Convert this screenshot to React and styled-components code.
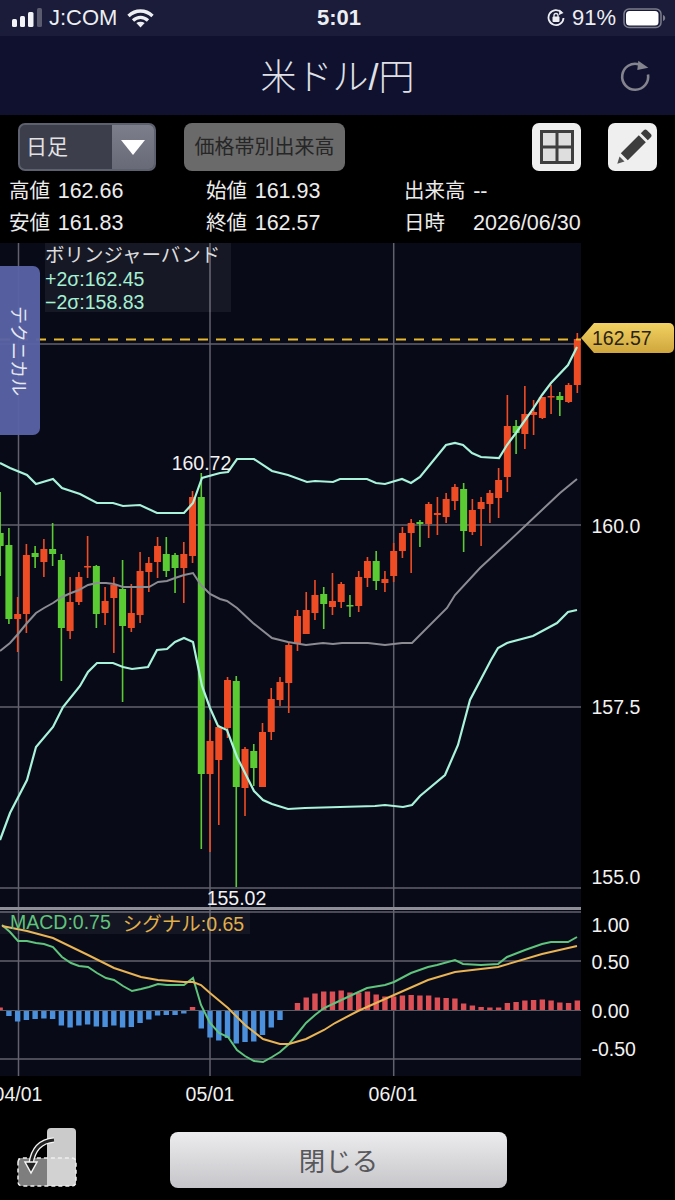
import React from "react"
import styled, { createGlobalStyle } from "styled-components"

const SANS = `"Liberation Sans", "Noto Sans CJK JP", sans-serif`

// candles left to right: [colour, wick top, body top, body bottom, wick bottom]
const CANDLES = [
  ["g", 492, 533, 546, 576], ["g", 528, 545, 619, 624], ["r", 597, 614, 619, 652], ["r", 544, 555, 614, 633],
  ["g", 546, 553, 557, 568], ["r", 539, 549, 562, 577], ["g", 523, 549, 554, 566], ["g", 554, 560, 628, 681],
  ["r", 577, 602, 631, 639], ["r", 572, 577, 602, 605], ["r", 536, 566, 567, 578], ["g", 565, 566, 614, 628],
  ["r", 587, 601, 613, 625], ["r", 577, 585, 598, 653], ["g", 560, 589, 626, 702], ["r", 584, 613, 628, 632],
  ["r", 552, 571, 615, 623], ["r", 557, 563, 572, 592], ["r", 537, 546, 562, 578], ["g", 537, 554, 571, 577],
  ["g", 553, 555, 568, 593], ["r", 542, 554, 568, 603], ["r", 491, 497, 556, 563], ["g", 473, 497, 774, 849],
  ["r", 720, 741, 774, 852], ["r", 725, 727, 760, 825], ["r", 677, 680, 728, 738], ["g", 676, 681, 787, 887],
  ["r", 747, 749, 788, 816], ["g", 744, 751, 768, 786], ["r", 723, 732, 787, 787], ["r", 688, 699, 732, 740],
  ["r", 677, 682, 700, 706], ["r", 643, 645, 683, 713], ["r", 610, 616, 643, 651], ["r", 592, 610, 634, 634],
  ["r", 580, 595, 613, 620], ["g", 587, 594, 604, 629], ["r", 573, 601, 607, 615], ["r", 582, 584, 602, 608],
  ["g", 595, 605, 606, 617], ["r", 571, 577, 606, 612], ["r", 557, 561, 578, 587], ["g", 551, 561, 581, 590],
  ["r", 571, 579, 583, 592], ["r", 543, 551, 576, 582], ["r", 527, 533, 551, 558], ["r", 519, 523, 533, 573],
  ["g", 520, 522, 524, 547], ["r", 502, 504, 524, 538], ["r", 497, 513, 515, 535], ["r", 493, 499, 517, 523],
  ["r", 484, 487, 501, 510], ["g", 483, 489, 531, 552], ["r", 499, 510, 532, 535], ["r", 497, 502, 509, 546],
  ["r", 490, 493, 504, 523], ["r", 468, 480, 498, 518], ["r", 395, 426, 477, 492], ["g", 420, 426, 433, 454],
  ["r", 386, 414, 434, 449], ["r", 400, 412, 415, 435], ["r", 397, 397, 418, 419], ["r", 385, 396, 397, 414],
  ["g", 392, 396, 400, 416], ["r", 383, 385, 402, 403], ["r", 333, 339, 385, 393],
]

// MACD histogram, px from the zero line (up is positive)
const HIST = [
  3, -5.5, -11, -9.5, -8.5, -8, -8.5, -15, -17, -15, -14, -16, -16.5, -15, -17, -16.5, -12.5, -9, -5, -4.5,
  -4.5, -3, 3.5, -18, -27, -30, -27.5, -33, -31.5, -31, -24.5, -17, -9.5, 0, 7.5, 13, 17, 19, 19, 20, 18, 18,
  19, 16, 14, 14, 15, 15.5, 15, 15, 13, 12.5, 12, 7, 5, 3.5, 3, 3, 7.5, 8.5, 10, 10.5, 11, 10, 8, 7.5, 10,
]

const UPPER = "0,463 10,468 27,475 36,484 53,479 62,488 80,494 97,503 113,503 123,506 140,505 157,513 175,513 184,513 193,503 202,478 220,473 228,472 237,459 254,459 272,471 288,475 307,482 315,481 333,482 340,479 367,479 376,483 385,484 402,479 411,483 420,477 446,445 455,443 463,445 472,453 481,457 499,458 507,445 516,433 533,409 542,395 551,383 568,365 577,347"
const MIDDLE = "0,651 10,643 18,634 27,623 36,613 44,608 53,603 62,597 71,593 79,590 88,585 97,583 106,583 114,584 123,587 132,587 149,587 158,582 167,581 175,578 184,575 193,573 201,585 210,594 220,599 227,601 237,608 253,623 272,638 288,642 306,645 323,643 333,644 342,643 368,643 385,645 402,643 412,643 447,608 455,595 480,568 508,542 560,493 577,479"
const LOWER = "0,840 10,813 27,780 36,747 53,727 63,707 80,686 88,672 97,663 113,663 123,667 132,669 148,667 157,650 167,649 175,642 184,638 193,642 202,686 210,708 218,726 227,730 237,757 245,773 254,791 263,800 272,804 288,809 305,808 340,807 375,806 385,805 403,807 412,805 420,796 445,775 458,745 470,700 491,660 498,648 507,643 533,636 557,623 568,612 577,610"
const MACD = "2,925 10,932 18,941 27,941 36,943 44,944 53,947 62,957 71,963 79,966 88,967 97,973 106,978 114,980 123,986 132,991 141,989 149,987 158,984 167,985 184,985 193,978 201,1005 210,1023 219,1033 228,1037 237,1050 245,1056 254,1061 263,1062 272,1057 280,1052 289,1044 298,1033 306,1023 315,1015 324,1008 335,1003 352,995 367,988 385,985 394,982 411,973 428,967 437,965 455,960 463,964 481,965 498,964 507,957 525,950 542,944 551,942 568,942 577,937"
const SIGNAL = "2,926 27,931 53,938 88,955 114,968 141,977 158,980 184,982 193,982 201,985 210,993 228,1008 245,1025 263,1039 280,1044 289,1044 306,1039 324,1030 335,1023 358,1011 394,995 428,980 455,972 498,967 542,954 577,946"

const GRID_Y = [344, 525, 707, 888, 912, 961, 1059]
const GRID_X = [18.5, 210, 393.7]
const Y_LABELS = [["160.0", 526], ["157.5", 707], ["155.0", 877], ["1.00", 925], ["0.50", 962], ["0.00", 1011], ["-0.50", 1049]]
const X_LABELS = [["04/01", 18], ["05/01", 210], ["06/01", 393]]
const ZERO = 1010.5

const candleX = i => 0.15 + 8.745 * i

const GlobalStyle = createGlobalStyle`
  html, body {
    margin: 0;
    background: #000;
  }
  body {
    width: 675px;
    height: 1200px;
    overflow: hidden;
    font-family: ${SANS};
  }
`

const Page = styled.div`
  width: 675px;
  height: 1200px;
  display: flex;
  flex-direction: column;
  background: #000;
  color: #eee;
`

const StatusBar = styled.div`
  height: 36px;
  padding: 0 9px 0 12px;
  display: grid;
  grid-template-columns: 1fr auto 1fr;
  align-items: center;
  background: #1a1c39;
  color: #eceef2;
  font-size: 22px;
`

const StatusGroup = styled.div`
  display: flex;
  align-items: center;
  gap: ${p => p.$gap || 7}px;
  justify-content: ${p => (p.$end ? "flex-end" : "flex-start")};
`

const Clock = styled.div`
  font-size: 22px;
  font-weight: 700;
`

const NavBar = styled.div`
  position: relative;
  height: 79px;
  padding-bottom: 4px;
  box-sizing: border-box;
  display: flex;
  align-items: center;
  justify-content: center;
  background: #10112f;
`

const Title = styled.h1`
  margin: 0;
  color: #dfe0e6;
  font-size: 36px;
  font-weight: 300;
`

const RefreshButton = styled.div`
  position: absolute;
  right: 23px;
  top: 24px;
  width: 32px;
  height: 32px;
`

const Toolbar = styled.div`
  margin-top: 8px;
  padding: 0 18px;
  display: flex;
  align-items: stretch;
  height: 48px;
`

const Select = styled.div`
  width: 138px;
  box-sizing: border-box;
  display: flex;
  border: 2px solid #5d606e;
  border-radius: 7px;
  overflow: hidden;
  background: #3c3e4b;
`

const SelectLabel = styled.div`
  width: 92px;
  box-sizing: border-box;
  padding: 0 0 4px 6px;
  display: flex;
  align-items: center;
  font-size: 21px;
  color: #e2e2e4;
`

const SelectArrow = styled.div`
  flex: 1;
  display: flex;
  align-items: center;
  justify-content: center;
  background: linear-gradient(#7c7f8b, #686b77);

  &::after {
    content: "";
    border-left: 12px solid transparent;
    border-right: 12px solid transparent;
    border-top: 15px solid #fff;
  }
`

const VolumeButton = styled.div`
  width: 161px;
  box-sizing: border-box;
  margin-left: 28px;
  padding-bottom: 3px;
  display: flex;
  align-items: center;
  justify-content: center;
  border-radius: 8px;
  background: #6a6a6a;
  color: #262626;
  font-size: 20px;
`

const ToolButtons = styled.div`
  margin-left: auto;
  display: flex;
  gap: 27px;
`

const IconButton = styled.div`
  width: 49px;
  display: flex;
  align-items: center;
  justify-content: center;
  border-radius: 7px;
  background: #efefef;
`

const InfoGrid = styled.div`
  margin-top: 2px;
  height: 64px;
  display: grid;
  grid-template-columns: 197px 198px 1fr;
  grid-auto-rows: 32px;
  padding-left: 9px;
  align-items: center;
  font-size: 20.5px;
  color: #ececec;
`

const InfoCell = styled.div`
  white-space: nowrap;
`

const InfoValue = styled.span`
  margin-left: ${p => p.$gap || 2}px;
  font-size: 21.5px;
`

const ChartPanel = styled.div`
  position: relative;
  margin-top: 6px;
  height: 867px;
`

const ChartSvg = styled.svg`
  display: block;
`

const AxisText = styled.text`
  fill: #f2f2f2;
  font-family: ${SANS};
  font-size: 19.5px;
`

const TechnicalTab = styled.div`
  position: absolute;
  left: 0;
  top: 23px;
  width: 40px;
  height: 169px;
  display: flex;
  align-items: center;
  justify-content: center;
  border-radius: 0 7px 7px 0;
  background: rgba(88, 99, 165, 0.96);
  color: #e6e8f2;
  font-size: 18px;
  writing-mode: vertical-rl;
  text-orientation: sideways;
`

const Legend = styled.div`
  position: absolute;
  left: 45px;
  top: 0;
  width: 186px;
  height: 69px;
  background: rgba(255, 255, 255, 0.06);
  padding-top: 1px;
  box-sizing: border-box;
  line-height: 23.5px;
  overflow: hidden;
`

const LegendTitle = styled.div`
  color: #dcdcdc;
  font-size: 19.5px;
  white-space: nowrap;
`

const LegendValue = styled.div`
  color: #a4f0d2;
  font-size: 19.5px;
`

const MacdLegend = styled.div`
  position: absolute;
  left: 0;
  top: 668px;
  height: 23px;
  width: 240px;
  padding-left: 10px;
  display: flex;
  align-items: center;
  gap: 12px;
  background: rgba(255, 255, 255, 0.05);
  font-size: 19.5px;
  white-space: nowrap;
`

const MacdValue = styled.span`
  color: ${p => p.$color};
`

const PriceTag = styled.div`
  position: absolute;
  left: 581px;
  top: 80px;
  width: 93px;
  height: 30px;
  padding-left: 11px;
  box-sizing: border-box;
  display: flex;
  align-items: center;
  background: linear-gradient(#f2d162, #cfa63c);
  clip-path: polygon(13px 0, 100% 0, 100% 100%, 13px 100%, 0 50%);
  border-radius: 0 5px 5px 0;
  color: #2a2414;
  font-size: 19.5px;
`

const BottomBar = styled.div`
  flex: 1;
  padding: 18px 0 0 17px;
  display: flex;
  align-items: flex-start;
`

const CloseButton = styled.div`
  width: 337px;
  height: 56px;
  margin: 4px 0 0 93px;
  padding-bottom: 2px;
  box-sizing: border-box;
  display: flex;
  align-items: center;
  justify-content: center;
  border-radius: 8px;
  background: linear-gradient(#ececee, #c6c6ca);
  color: #58585c;
  font-size: 26.5px;
`

const Wifi = () => (
  <svg width="30" height="20" viewBox="-3 0 30 20">
    <path d="M1.500 8C4.700 5 8.600 3 13.500 3s8.800 2 12 5" fill="none" stroke="#eceef2" strokeWidth="3.400" />
    <path d="M6 12.500c2.100-2 4.700-3.200 7.500-3.200s5.400 1.200 7.500 3.200" fill="none" stroke="#eceef2" strokeWidth="3.200" />
    <path d="M13.500 19.500l-4.200-4.600c2.500-1.700 5.900-1.700 8.400 0z" fill="#eceef2" />
  </svg>
)

const SignalIcon = () => (
  <svg width="30" height="20" viewBox="0 0 30 20">
    <rect x="0" y="11" width="5" height="8" rx="1.500" fill="#f2f3f6" />
    <rect x="8" y="8" width="5" height="11" rx="1.500" fill="#f2f3f6" />
    <rect x="16" y="4" width="5.500" height="15" rx="1.500" fill="#f2f3f6" />
    <rect x="25" y="0" width="5" height="19" rx="1.500" fill="#5a5b6e" />
  </svg>
)

const RotationLock = () => (
  <svg width="18" height="20" viewBox="0 0 18 20">
    <path d="M14.500 4.500A7.500 7.500 0 1 0 16.500 10" fill="none" stroke="#eceef2" strokeWidth="1.800" />
    <path d="M12.500 1.500l4 3.500-4.500 2z" fill="#eceef2" />
    <rect x="5.500" y="8.500" width="7" height="5.500" rx="1" fill="#eceef2" />
    <path d="M7 9V7.500a2 2 0 0 1 4 0V9" fill="none" stroke="#eceef2" strokeWidth="1.300" />
  </svg>
)

const Battery = () => (
  <svg width="43" height="21" viewBox="0 0 43 21">
    <rect x="1" y="1" width="37" height="18.500" rx="5" fill="none" stroke="#7c7d8c" strokeWidth="1.500" />
    <rect x="3" y="3" width="32.500" height="14.500" rx="3.500" fill="#fff" />
    <path d="M40 7v6c1.500-.4 2.200-1.700 2.200-3S41.500 7.400 40 7z" fill="#7c7d8c" />
  </svg>
)

const RefreshIcon = () => (
  <svg width="32" height="32" viewBox="0 0 32 32">
    <path d="M28 14.500A13 13 0 1 1 19 4.300" fill="none" stroke="#83848e" strokeWidth="2.600" />
    <path d="M18.300 .7l10 7-11 2.300z" fill="#83848e" />
  </svg>
)

const WindowIcon = () => (
  <svg width="34" height="34" viewBox="0 0 34 34">
    <rect x="1.500" y="1.500" width="31" height="31" fill="#dedede" stroke="#3f3f3f" strokeWidth="3" />
    <path d="M17 2v30M2 17h30" stroke="#3f3f3f" strokeWidth="3" />
  </svg>
)

const PencilIcon = () => (
  <svg width="38" height="38" viewBox="0 0 38 38">
    <path d="M6.800 25.300L24.800 7.300l7 7L13.800 32.300z" fill="#3d3d3d" />
    <path d="M26.800 5.300l3-3c1-1 2.200-1 3.200 0l3.800 3.800c1 1 1 2.200 0 3.200l-3 3z" fill="#3d3d3d" />
    <path d="M3.300 35.800l2.200-7.300 5 5z" fill="#555" />
  </svg>
)

const TransferIcon = () => (
  <svg width="60" height="60" viewBox="0 0 60 60">
    <path d="M30 4a4 4 0 0 1 4-4h21a4 4 0 0 1 4 4v26H30z" fill="#cbcbcb" />
    <path d="M30 30h29v24a4 4 0 0 1-4 4H30z" fill="#d2d2d2" />
    <path d="M1 30h29v28H5a4 4 0 0 1-4-4z" fill="#7e7e7e" />
    <path d="M1 34a4 4 0 0 1 4-4h50a4 4 0 0 1 4 4v20a4 4 0 0 1-4 4H5a4 4 0 0 1-4-4z" fill="none" stroke="#f0f0f0" strokeWidth="1.500" strokeDasharray="4 3" />
    <path d="M37 12C24 13 16 21 14 36" fill="none" stroke="#f4f4f4" strokeWidth="5.500" />
    <path d="M37 12C24 13 16 21 14 36" fill="none" stroke="#222" strokeWidth="2.800" />
    <path d="M14 45L8 34h12z" fill="#222" stroke="#f4f4f4" strokeWidth="1.500" />
  </svg>
)

const Chart = () => (
  <ChartSvg width="675" height="867" viewBox="0 243 675 867">
    <rect x="0" y="243" width="581" height="833" fill="#090a18" />
    {GRID_Y.map(y => (
      <line key={y} x1="0" x2="581" y1={y} y2={y} stroke="#62626c" strokeWidth="1.500" />
    ))}
    {GRID_X.map(x => (
      <line key={x} x1={x} x2={x} y1="243" y2="1076" stroke="#62626e" strokeWidth="1.500" />
    ))}

    {CANDLES.map(([c, wt, bt, bb, wb], i) => {
      const x = candleX(i)
      const fill = c === "r" ? "#ee4c24" : "#5bcb33"
      return (
        <g key={i} fill={fill}>
          <rect x={x - 0.8} y={wt} width="1.600" height={wb - wt} />
          <rect x={x - 3.500} y={bt} width="7" height={Math.max(bb - bt, 1.500)} />
        </g>
      )
    })}

    <polyline points={MIDDLE} fill="none" stroke="#8b8b92" strokeWidth="2" />
    <polyline points={UPPER} fill="none" stroke="#a8f3da" strokeWidth="2.200" />
    <polyline points={LOWER} fill="none" stroke="#a8f3da" strokeWidth="2.200" />
    <line x1="0" x2="581" y1="339.500" y2="339.500" stroke="#e8b92e" strokeWidth="2" strokeDasharray="10 8" />

    <rect x="0" y="907" width="581" height="3" fill="#8e8e96" />

    {HIST.map((h, i) => (
      <rect
        key={i}
        x={candleX(i) - 2.700}
        y={h > 0 ? ZERO - h : ZERO}
        width="5.400"
        height={Math.abs(h)}
        fill={h > 0 ? "#dc4f55" : "#4a90dc"}
      />
    ))}
    <line x1="0" x2="581" y1={ZERO} y2={ZERO} stroke="#5b5b66" strokeWidth="1" />
    <polyline points={MACD} fill="none" stroke="#5fc47c" strokeWidth="2" />
    <polyline points={SIGNAL} fill="none" stroke="#e8b454" strokeWidth="2" />

    <AxisText x="201.500" y="469.500" textAnchor="middle">160.72</AxisText>
    <AxisText x="236.500" y="905" textAnchor="middle">155.02</AxisText>
    {Y_LABELS.map(([t, y]) => (
      <AxisText key={t} x="591.500" y={y + 6.500}>{t}</AxisText>
    ))}
    {X_LABELS.map(([t, x]) => (
      <AxisText key={t} x={x} y="1100.500" textAnchor="middle">{t}</AxisText>
    ))}
  </ChartSvg>
)

export default function App() {
  return (
    <Page>
      <GlobalStyle />
      <StatusBar>
        <StatusGroup>
          <SignalIcon />
          <span>J:COM</span>
          <Wifi />
        </StatusGroup>
        <Clock>5:01</Clock>
        <StatusGroup $end $gap={7}>
          <RotationLock />
          <span>91%</span>
          <Battery />
        </StatusGroup>
      </StatusBar>

      <NavBar>
        <Title>米ドル/円</Title>
        <RefreshButton>
          <RefreshIcon />
        </RefreshButton>
      </NavBar>

      <Toolbar>
        <Select>
          <SelectLabel>日足</SelectLabel>
          <SelectArrow />
        </Select>
        <VolumeButton>価格帯別出来高</VolumeButton>
        <ToolButtons>
          <IconButton>
            <WindowIcon />
          </IconButton>
          <IconButton>
            <PencilIcon />
          </IconButton>
        </ToolButtons>
      </Toolbar>

      <InfoGrid>
        <InfoCell>高値 <InfoValue>162.66</InfoValue></InfoCell>
        <InfoCell>始値 <InfoValue>161.93</InfoValue></InfoCell>
        <InfoCell>出来高 <InfoValue>--</InfoValue></InfoCell>
        <InfoCell>安値 <InfoValue>161.83</InfoValue></InfoCell>
        <InfoCell>終値 <InfoValue>162.57</InfoValue></InfoCell>
        <InfoCell>日時<InfoValue $gap={28}>2026/06/30</InfoValue></InfoCell>
      </InfoGrid>

      <ChartPanel>
        <Chart />
        <TechnicalTab>テクニカル</TechnicalTab>
        <Legend>
          <LegendTitle>ボリンジャーバンド</LegendTitle>
          <LegendValue>+2σ:162.45</LegendValue>
          <LegendValue>−2σ:158.83</LegendValue>
        </Legend>
        <MacdLegend>
          <MacdValue $color="#5fc47c">MACD:0.75</MacdValue>
          <MacdValue $color="#e2b04a">シグナル:0.65</MacdValue>
        </MacdLegend>
        <PriceTag>162.57</PriceTag>
      </ChartPanel>

      <BottomBar>
        <TransferIcon />
        <CloseButton>閉じる</CloseButton>
      </BottomBar>
    </Page>
  )
}
